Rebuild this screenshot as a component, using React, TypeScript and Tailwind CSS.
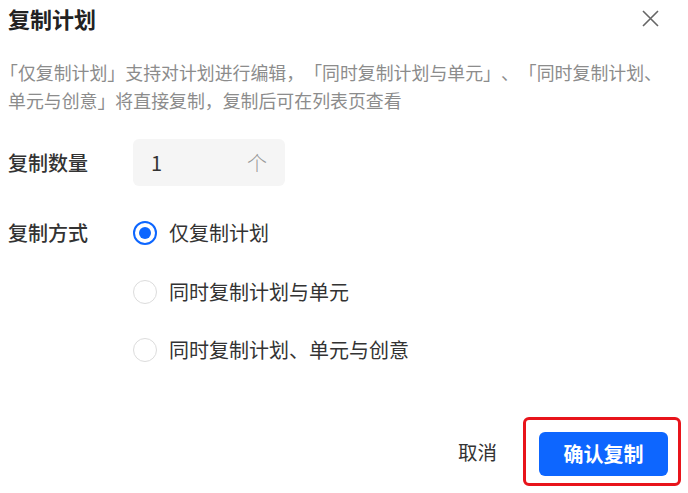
import { useState } from "react";

const font = { fontFamily: '"Noto Sans CJK SC", "Noto Sans", sans-serif' };

const options = ["仅复制计划", "同时复制计划与单元", "同时复制计划、单元与创意"];

function Radio({ checked }: { checked: boolean }) {
  return checked ? (
    <span className="flex h-[24px] w-[24px] items-center justify-center rounded-full border-2 border-[#0d66ff]">
      <span className="h-[12px] w-[12px] rounded-full bg-[#0d66ff]" />
    </span>
  ) : (
    <span className="h-[24px] w-[24px] rounded-full border border-[#dcdcdc] bg-white" />
  );
}

export default function App() {
  const [mode, setMode] = useState(0);

  return (
    <div
      className="flex h-[493px] w-[688px] flex-col overflow-hidden bg-white [text-spacing-trim:space-all]"
      style={font}
    >
      {/* header */}
      <div className="flex items-start justify-between pl-[8px] pr-[29px] pt-[4px]">
        <h1 className="text-[22px] font-semibold leading-[28px] text-[#222]">复制计划</h1>
        <button className="mt-[6px] h-[17px] w-[17px] text-[#666]">
          <svg viewBox="0 0 17 17" className="h-[17px] w-[17px]" fill="none" stroke="currentColor" strokeWidth="1.6">
            <path d="M1 1 L16 16 M16 1 L1 16" />
          </svg>
        </button>
      </div>

      {/* description */}
      <p className="mt-[26px] whitespace-nowrap pl-[0px] text-[17.9px] leading-[28px] text-[#8c8c8c]">
        「仅复制计划」支持对计划进行编辑，「同时复制计划与单元」、「同时复制计划、
        <br />
        <span className="pl-[8px]">单元与创意」将直接复制，复制后可在列表页查看</span>
      </p>

      {/* count */}
      <div className="mt-[25px] flex items-center pl-[8px]">
        <span className="w-[125px] text-[20px] font-medium text-[#333]">复制数量</span>
        <div className="flex h-[47px] w-[152px] items-center justify-between rounded-[6px] bg-[#f5f5f5] pl-[18px] pr-[18px]">
          <span className="text-[20px] text-[#333]">1</span>
          <span className="text-[20px] font-light text-[#999]">个</span>
        </div>
      </div>

      {/* mode */}
      <div className="mt-[18px] flex items-start pl-[8px]">
        <span className="flex h-[58.5px] w-[125px] items-center text-[20px] font-medium text-[#333]">
          复制方式
        </span>
        <div className="flex flex-col">
          {options.map((o, i) => (
            <label
              key={o}
              onClick={() => setMode(i)}
              className="flex h-[58.5px] cursor-pointer items-center gap-[12px]"
            >
              <Radio checked={mode === i} />
              <span className="text-[20px] text-[#333]">{o}</span>
            </label>
          ))}
        </div>
      </div>

      {/* footer */}
      <div className="mt-[37.5px] flex items-center justify-end pr-[7px]">
        <button className="mr-[26px] text-[19.5px] text-[#333]">取消</button>
        <div className="rounded-[6px] border-[3px] border-[#e8141b] pb-[7px] pl-[13px] pr-[10px] pt-[12px]">
          <button className="flex h-[44px] w-[129px] items-center justify-center rounded-[6px] bg-[#0d66ff] text-[20px] font-semibold text-white">
            确认复制
          </button>
        </div>
      </div>
    </div>
  );
}
